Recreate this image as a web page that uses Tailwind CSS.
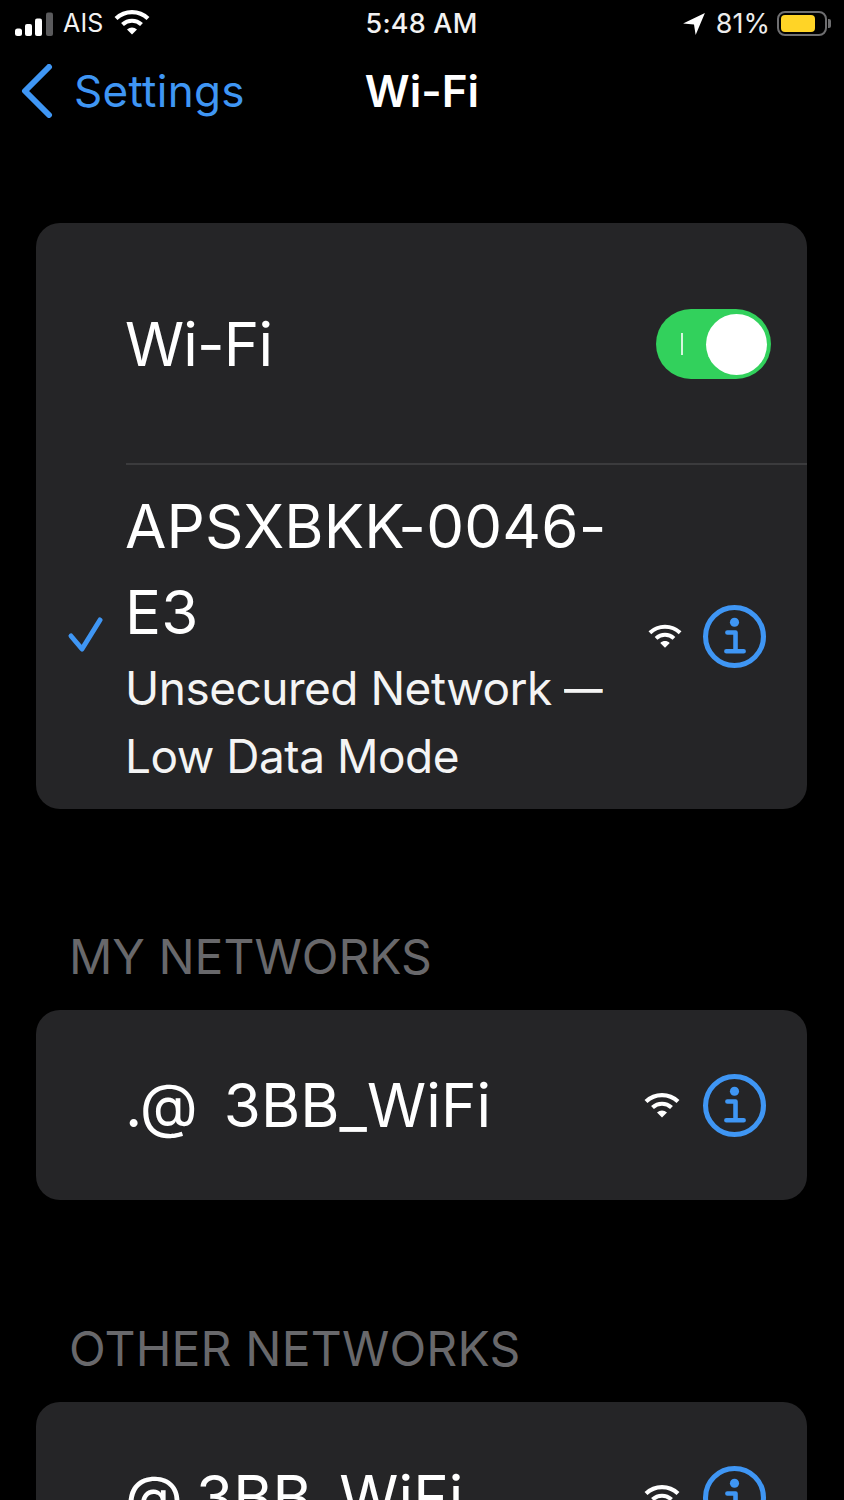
<!DOCTYPE html>
<html lang="en">
<head>
  <meta charset="UTF-8" />
  <title>Wi-Fi</title>
  <script src="https://cdn.jsdelivr.net/npm/@tailwindcss/browser@4"></script>
</head>
<body class="bg-black">
<div class="w-[844px] h-[1500px] overflow-hidden bg-black text-white font-['Inter',sans-serif]">

  <!-- status bar -->
  <div class="h-[47px] flex items-center justify-between pl-[15px] pr-[13px]">
    <div class="w-[300px] flex items-center">
      <svg width="38" height="26" viewBox="0 0 38 26" fill="#fff">
        <rect x="0" y="17.5" width="7" height="7.5" rx="2.5"/>
        <rect x="10" y="13" width="7" height="12" rx="2"/>
        <rect x="20" y="7.5" width="7" height="17.5" rx="2"/>
        <rect x="31" y="1.5" width="7" height="23.5" rx="2" fill="#5a5a5c"/>
      </svg>
      <span class="ml-[10px] text-[25px] leading-none font-normal tracking-[0.2px] text-[#f2f2f2]">AIS</span>
      <svg class="ml-[10px] -mt-[3px]" width="36" height="26" viewBox="0 0 36 26" fill="none" stroke="#fff" stroke-width="4.2">
        <path d="M2 9.5C11 1 25 1 34 9.5"/>
        <path d="M8.5 15.5C14 10.5 22 10.5 27.5 15.5"/>
        <path d="M13 20.5L18 25.5L23 20.5C20 17.7 16 17.7 13 20.5Z" fill="#fff" stroke="none"/>
      </svg>
    </div>
    <span class="-ml-[3px] text-[27px] leading-none font-medium tracking-[0.2px] text-[#f2f2f2]">5:48 AM</span>
    <div class="w-[300px] flex items-center justify-end">
      <svg width="24" height="24" viewBox="0 0 22 22" fill="#fff"><path d="M21 1L1 10.5L11 11.5L12.5 21Z"/></svg>
      <span class="ml-[10px] text-[27px] leading-none text-[#ededed]">81%</span>
      <div class="ml-[7px] flex items-center">
        <div class="w-[50px] h-[25px] rounded-[8px] border-2 border-[#6e6e70] p-[2px]">
          <div class="w-[34px] h-full rounded-[4px] bg-[#ffd426]"></div>
        </div>
        <div class="ml-[1px] w-[3px] h-[9px] rounded-r-[2px] bg-[#6e6e70]"></div>
      </div>
    </div>
  </div>

  <!-- nav -->
  <div class="relative h-[88px] flex items-center">
    <svg class="ml-[20px]" width="34" height="54" viewBox="0 0 34 54" fill="none" stroke="#3f96f4" stroke-width="6" stroke-linecap="round" stroke-linejoin="round"><path d="M29 3L5 27L29 51"/></svg>
    <span class="ml-[20px] text-[44px] leading-none tracking-[0.3px] text-[#3f96f4]">Settings</span>
    <span class="absolute left-0 right-0 text-center text-[44px] leading-none font-semibold">Wi-Fi</span>
  </div>

  <!-- wifi card -->
  <div class="mt-[88px] mx-[36px] w-[771px] h-[586px] rounded-[24px] bg-[#252527]">
    <div class="h-[242px] ml-[90px] border-b-2 border-[#3b3b3d] flex items-center justify-between pr-[36px] pt-[2px]">
      <span class="text-[60px] leading-none tracking-[-0.8px] -ml-[1px]">Wi-Fi</span>
      <div class="w-[115px] h-[70px] rounded-full bg-[#32d15c] flex items-center justify-between pl-[25px] pr-[4px]">
        <div class="w-[2px] h-[22px] bg-white/80"></div>
        <div class="w-[61px] h-[61px] rounded-full bg-white"></div>
      </div>
    </div>
    <div class="relative pl-[90px] pr-[41px] flex items-center justify-between">
      <svg class="absolute left-[31px] top-[151px]" width="38" height="38" viewBox="0 0 38 38" fill="none" stroke="#3f96f4" stroke-width="5" stroke-linecap="round" stroke-linejoin="round"><path d="M4 20L15 33L33 4"/></svg>
      <div class="pt-[18px] -ml-[1px]">
        <div class="text-[60px] leading-[86px] tracking-[0.2px] w-[490px]">APSXBKK-0046-<br>E3</div>
        <div class="text-[46px] leading-[68px] tracking-[-0.5px] -mt-[1px] w-[490px] text-[#f4f4f4]">Unsecured Network <span class="inline-block origin-left scale-x-[0.84]">—</span><br>Low Data Mode</div>
      </div>
      <div class="flex items-center gap-[21px] mt-[17px]">
        <svg width="34" height="28" viewBox="0 0 36 26" fill="none" stroke="#fff" stroke-width="4.2">
          <path d="M2 9.5C11 1 25 1 34 9.5"/>
          <path d="M8.5 15.5C14 10.5 22 10.5 27.5 15.5"/>
          <path d="M13 20.5L18 25.5L23 20.5C20 17.7 16 17.7 13 20.5Z" fill="#fff" stroke="none"/>
        </svg>
        <svg width="63" height="63" viewBox="0 0 62 62" fill="none" stroke="#3f96f4">
          <circle cx="31" cy="31" r="28.5" stroke-width="5"/>
          <circle cx="31" cy="17" r="4.5" fill="#3f96f4" stroke="none"/>
          <path d="M24 27H32V45M23 45.5H40" stroke-width="4.5" stroke-linecap="round" stroke-linejoin="round"/>
        </svg>
      </div>
    </div>
  </div>

  <!-- my networks -->
  <div class="mt-[120px] ml-[69px] text-[48px] leading-[56px] text-[#68686b]">MY NETWORKS</div>
  <div class="mt-[25px] mx-[36px] w-[771px] h-[190px] rounded-[24px] bg-[#252527] flex items-center justify-between pl-[90px] pr-[41px]">
    <span class="text-[60px] leading-none tracking-[0.1px] [word-spacing:-4px] whitespace-pre -ml-[1px]">.@  3BB_WiFi</span>
    <div class="flex items-center gap-[23px]">
      <svg width="36" height="28" viewBox="0 0 36 26" fill="none" stroke="#fff" stroke-width="4.2">
        <path d="M2 9.5C11 1 25 1 34 9.5"/>
        <path d="M8.5 15.5C14 10.5 22 10.5 27.5 15.5"/>
        <path d="M13 20.5L18 25.5L23 20.5C20 17.7 16 17.7 13 20.5Z" fill="#fff" stroke="none"/>
      </svg>
      <svg width="63" height="63" viewBox="0 0 62 62" fill="none" stroke="#3f96f4">
        <circle cx="31" cy="31" r="28.5" stroke-width="5"/>
        <circle cx="31" cy="17" r="4.5" fill="#3f96f4" stroke="none"/>
        <path d="M24 27H32V45M23 45.5H40" stroke-width="4.5" stroke-linecap="round" stroke-linejoin="round"/>
      </svg>
    </div>
  </div>

  <!-- other networks -->
  <div class="mt-[121px] ml-[69px] text-[48px] leading-[56px] tracking-[0.2px] text-[#68686b]">OTHER NETWORKS</div>
  <div class="mt-[25px] mx-[36px] w-[771px] h-[190px] rounded-[24px] bg-[#252527] flex items-center justify-between pl-[90px] pr-[41px]">
    <span class="text-[60px] leading-none tracking-[0.1px] [word-spacing:-4px] whitespace-pre -ml-[1px]">@ 3BB_WiFi</span>
    <div class="flex items-center gap-[23px]">
      <svg width="36" height="28" viewBox="0 0 36 26" fill="none" stroke="#fff" stroke-width="4.2">
        <path d="M2 9.5C11 1 25 1 34 9.5"/>
        <path d="M8.5 15.5C14 10.5 22 10.5 27.5 15.5"/>
        <path d="M13 20.5L18 25.5L23 20.5C20 17.7 16 17.7 13 20.5Z" fill="#fff" stroke="none"/>
      </svg>
      <svg width="63" height="63" viewBox="0 0 62 62" fill="none" stroke="#3f96f4">
        <circle cx="31" cy="31" r="28.5" stroke-width="5"/>
        <circle cx="31" cy="17" r="4.5" fill="#3f96f4" stroke="none"/>
        <path d="M24 27H32V45M23 45.5H40" stroke-width="4.5" stroke-linecap="round" stroke-linejoin="round"/>
      </svg>
    </div>
  </div>
</div>
</body>
</html>
